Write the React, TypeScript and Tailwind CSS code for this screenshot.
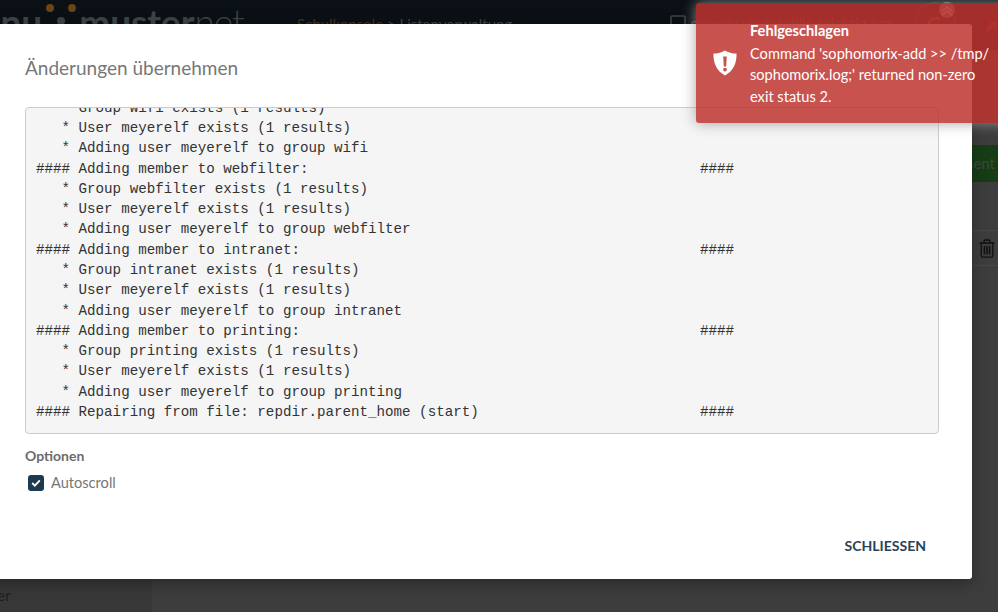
const sans = "font-['Lato','Noto_Sans',sans-serif]";

const LOG = `   * Group wifi exists (1 results)
   * User meyerelf exists (1 results)
   * Adding user meyerelf to group wifi
#### Adding member to webfilter:                                              ####
   * Group webfilter exists (1 results)
   * User meyerelf exists (1 results)
   * Adding user meyerelf to group webfilter
#### Adding member to intranet:                                               ####
   * Group intranet exists (1 results)
   * User meyerelf exists (1 results)
   * Adding user meyerelf to group intranet
#### Adding member to printing:                                               ####
   * Group printing exists (1 results)
   * User meyerelf exists (1 results)
   * Adding user meyerelf to group printing
#### Repairing from file: repdir.parent_home (start)                          ####`;

function TrashIcon() {
  return (
    <svg width="16" height="19" viewBox="0 0 16 19" fill="none" stroke="#111" strokeWidth="1.3">
      <path d="M0.5 4h15M5 4V2.2C5 1.4 5.6 1 6.2 1h3.6c.6 0 1.2.4 1.2 1.2V4" />
      <path d="M2.2 4v12.6c0 .9.6 1.6 1.4 1.6h8.8c.8 0 1.4-.7 1.4-1.6V4" />
      <path d="M5.4 7v8.5M8 7v8.5M10.6 7v8.5" strokeWidth="1.5" />
    </svg>
  );
}

function Backdrop() {
  return (
    <div className="flex h-full w-full flex-col bg-[#3d3d3d]">
      {/* top bar, dimmed by the modal overlay */}
      <div className="flex h-[50px] shrink-0 items-start overflow-hidden bg-[#0a1015]">
        <div className="ml-[-9px] flex w-[306px] shrink-0 items-center text-[37px] leading-[44px] text-[#3f4346]">
          <span className={`${sans} font-bold`}>inu</span>
          <svg width="36" height="40" viewBox="0 0 36 40" className="ml-[1px] shrink-0">
            <circle cx="7" cy="6" r="4" fill="#6b4514" />
            <circle cx="29" cy="6" r="4" fill="#6b4514" />
            <circle cx="18" cy="19" r="4" fill="#3f4346" />
            <circle cx="7" cy="30" r="4" fill="#6b4514" />
            <circle cx="29" cy="30" r="4" fill="#6b4514" />
          </svg>
          <span className={`${sans} font-bold`}>muster</span>
          <span className={`${sans} font-light tracking-[-1px]`}>net</span>
        </div>
        <div className={`${sans} mt-[14px] text-[15px] leading-5 whitespace-nowrap`}>
          <span className="text-[#4b3212]">Schulkonsole</span>
          <span className="text-[#3f4346]"> &gt; Listenverwaltung</span>
        </div>
        <div className={`${sans} ml-auto flex items-start pr-[1px]`}>
          <svg width="16" height="14" viewBox="0 0 16 14" className="mt-[15px]" fill="none" stroke="#3f4346" strokeWidth="1.6">
            <rect x="1" y="1" width="14" height="9" rx="1" />
            <path d="M4 13h8" />
          </svg>
          <span className="mt-[13px] ml-[5px] text-[15px] leading-5 whitespace-nowrap text-[#3f4346]">server.schule.willie-wichtig.org</span>
          <svg width="52" height="46" viewBox="0 0 52 46" className="ml-[22px] shrink-0" fill="none">
            <circle cx="21" cy="23" r="20" stroke="#4b4a22" />
            <circle cx="33" cy="10" r="8" fill="#777" />
            <path d="M28 11l5-4 5 4M28 15l5-4 5 4" stroke="#ddd" strokeWidth="1.6" />
            <path d="M14 30a9 9 0 0 1 12-11" stroke="#8a4a14" strokeWidth="2" />
          </svg>
          <svg width="13" height="13" viewBox="0 0 16 16" className="mt-[21px] ml-[18px]" fill="#701818">
            <path d="M6 1h9v9l-3-3-7 7-3-3 7-7z" />
          </svg>
        </div>
      </div>
      <div className="flex min-h-0 flex-1">
        <div className={`${sans} flex w-[152px] shrink-0 flex-col justify-end overflow-hidden bg-[#383838] pb-[6px] text-[15px] text-[#1e1e1e]`}>
          <span className="ml-[-49px]">Benutzer</span>
        </div>
        <div className="flex flex-1 flex-col items-end pt-[95px]">
          <div className={`${sans} flex h-[37px] w-[100px] items-center justify-end bg-[#163d16] pr-[3px] text-[15px] text-[#3b4a3b]`}>
            Present
          </div>
          <div className="mt-[48px] flex h-[36px] w-full items-center justify-end border-y border-[#474747] pr-[3px]">
            <TrashIcon />
          </div>
        </div>
      </div>
    </div>
  );
}

function ShieldIcon() {
  return (
    <svg width="24" height="26" viewBox="0 0 24 26" className="shrink-0">
      <path
        d="M12 0.5C15 2.6 19 3.6 23.5 3.6C23.8 13 20.5 21 12 25.5C3.5 21 0.2 13 0.5 3.6C5 3.6 9 2.6 12 0.5Z"
        fill="#fff"
      />
      <path d="M10.2 6.5h3.6l-.6 10h-2.4z" fill="#c8524e" />
      <circle cx="12" cy="19.6" r="1.9" fill="#c8524e" />
    </svg>
  );
}

export default function App() {
  return (
    <div className="relative h-[612px] w-[998px] overflow-hidden">
      <Backdrop />

      {/* modal */}
      <div className={`${sans} absolute left-[-100px] top-[24px] flex h-[555px] w-[1072px] flex-col rounded-[3px] bg-white pl-[125px] pr-[33px] shadow-[0_5px_15px_rgba(0,0,0,0.3)]`}>
        <h4 className="mt-[32px] text-[19px] leading-6 text-[#777]">Änderungen übernehmen</h4>
        <div className="mt-[27px] h-[327px] overflow-hidden rounded-[4px] border border-[#ccc] bg-[#f5f5f5] pl-[10px]">
          <pre className="mt-[-10.4px] font-['Liberation_Mono',monospace] text-[14.2px] leading-[20.3px] text-[#333]">{LOG}</pre>
        </div>
        <div className="mt-[12px] text-[14px] leading-5 font-bold text-[#6b6b6b]">Optionen</div>
        <label className="mt-[7px] ml-[3px] flex items-center gap-[7px] text-[14.6px] leading-5 text-[#777]">
          <span className="flex h-[16px] w-[16px] items-center justify-center rounded-[3px] bg-[#1f3a4f]">
            <svg width="10" height="8" viewBox="0 0 10 8">
              <path d="M1.2 4l2.6 2.6L8.8 1.4" fill="none" stroke="#fff" strokeWidth="1.8" />
            </svg>
          </span>
          Autoscroll
        </label>
        <div className="mt-auto mb-[23px] flex justify-end pr-[13px]">
          <button className="text-[14px] leading-5 font-bold text-[#2a4356]">SCHLIESSEN</button>
        </div>
      </div>

      {/* toast */}
      <div className={`${sans} absolute left-[696px] top-[3px] flex h-[120px] w-[320px] items-start rounded-[3px] bg-[#be342f]/85 pt-[17px] text-[14.6px] leading-[21.5px] text-white shadow-[0_0_14px_rgba(153,153,153,0.9)]`}>
        <div className="ml-[17px] mt-[30px]">
          <ShieldIcon />
        </div>
        <div className="ml-[13px] w-[246px]">
          <div className="font-bold">Fehlgeschlagen</div>
          <div className="mt-[1px]">Command 'sophomorix-add &gt;&gt; /tmp/ sophomorix.log;' returned non-zero exit status 2.</div>
        </div>
      </div>
    </div>
  );
}
